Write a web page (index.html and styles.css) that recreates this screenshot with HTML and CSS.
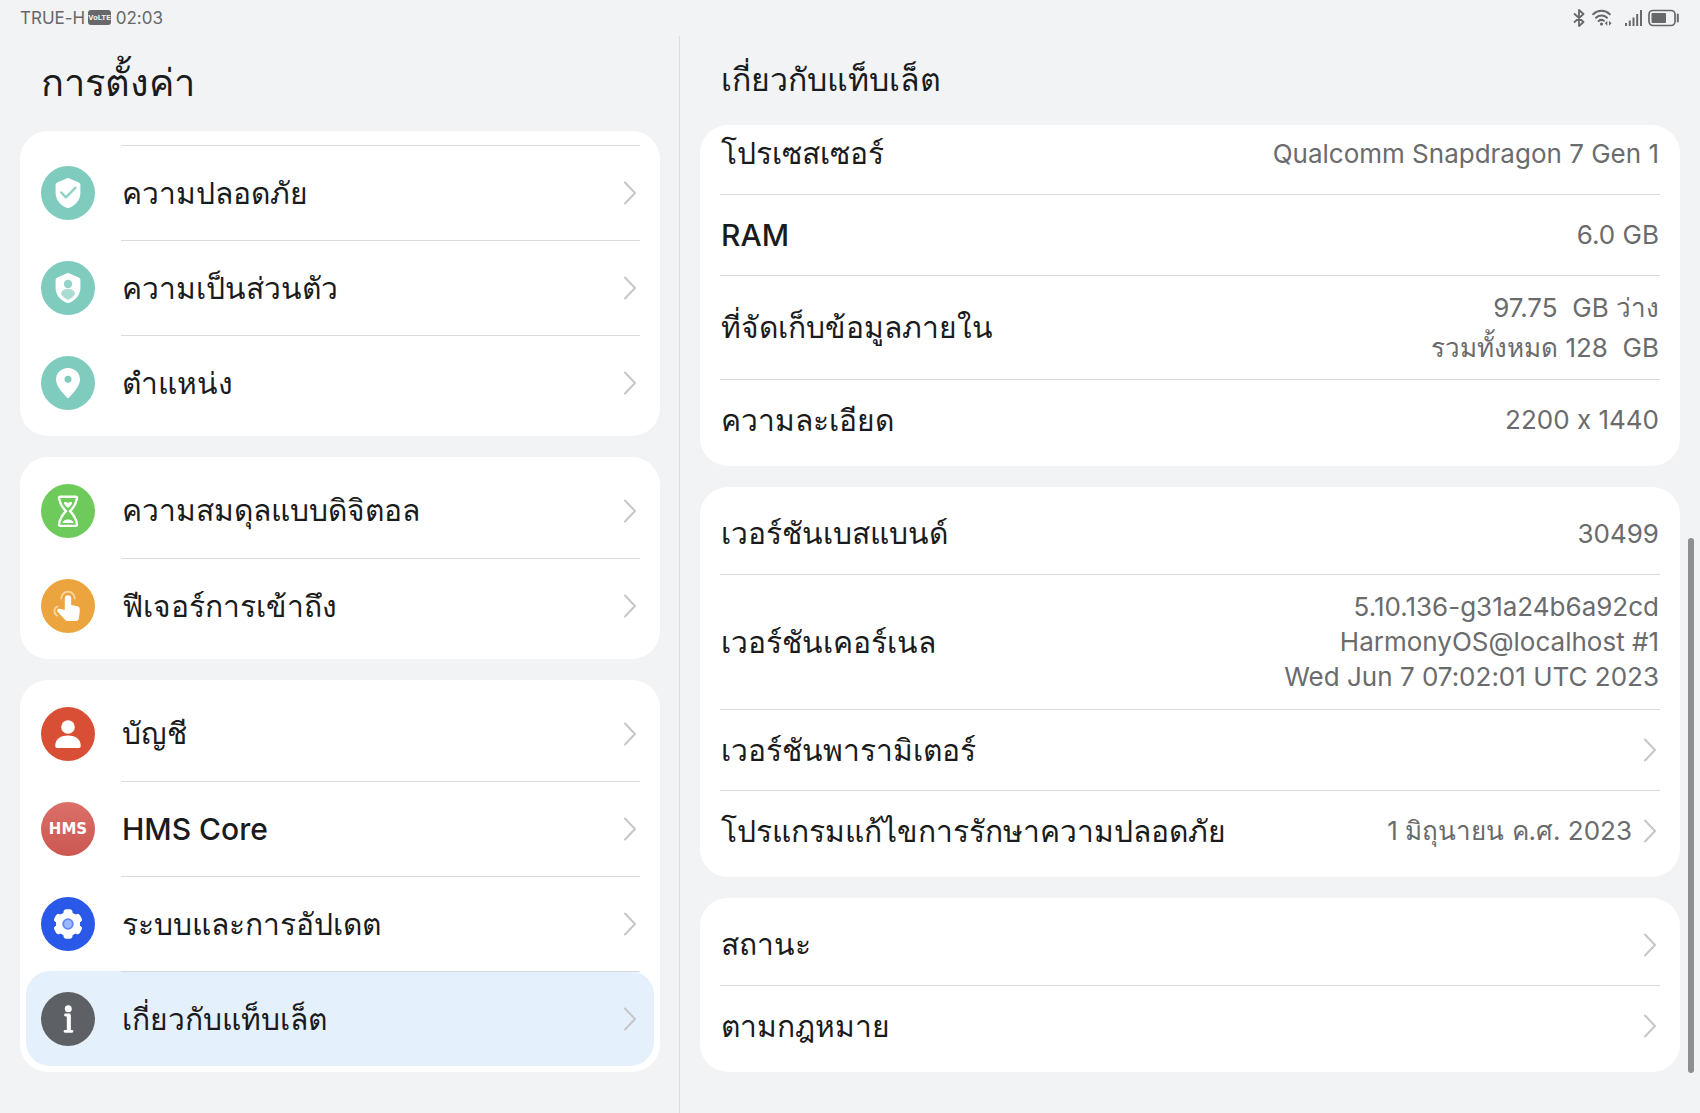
FILE: index.html
```html
<!DOCTYPE html>
<html lang="th">
<head>
<meta charset="utf-8">
<meta name="viewport" content="width=device-width, initial-scale=1">
<title>การตั้งค่า</title>
<link rel="stylesheet" href="styles.css">
</head>
<body>
<svg class="defs" aria-hidden="true">
  <symbol id="chevron" viewBox="0 0 12 24"><path d="M1 1.500 11 12 1 22.500" fill="none" stroke="currentColor" stroke-width="2" stroke-linecap="round" stroke-linejoin="round"/></symbol>
</svg>

<header class="status">
  <div class="status-side">
    <span>TRUE-H</span><span class="volte">VoLTE</span><time class="clock">02:03</time>
  </div>
  <div class="status-side status-icons" aria-hidden="true">
    <svg class="bt" width="12" height="18" viewBox="0 0 12 18"><path d="M1 4.500 10.500 13 6 17V1l4.500 4L1 13.500" fill="none" stroke="currentColor" stroke-width="1.800" stroke-linejoin="round"/></svg>
    <svg class="wifi" width="20" height="18" viewBox="0 0 20 18"><g fill="none" stroke="currentColor" stroke-width="2" stroke-linecap="round"><path d="M1.200 5.200a12 12 0 0 1 16.600 0"/><path d="M4 8.800a8 8 0 0 1 11 0"/><path d="M6.600 12a4.500 4.500 0 0 1 5.400-.2"/></g><circle cx="9.500" cy="15" r="1.600" fill="currentColor"/><path d="M15.300 11.800v5l-2.500-2.500zM17 11.800v5l2.500-2.500z" fill="currentColor"/></svg>
    <svg class="signal" width="18" height="18" viewBox="0 0 18 18"><path d="M0 14h2v3H0zM3.800 11.500h2V17h-2zM7.500 8.500h2V17h-2zM11.200 5h2v12h-2zM15 1h2v16h-2z" fill="currentColor"/></svg>
    <svg width="32" height="18" viewBox="0 0 32 18"><rect x="1" y="1.500" width="26" height="15" rx="4" fill="none" stroke="currentColor" stroke-width="1.700"/><rect x="3.500" y="4" width="14.500" height="10" rx="1" fill="currentColor"/><path d="M29.800 5.500v7" stroke="currentColor" stroke-width="2" stroke-linecap="round"/></svg>
  </div>
</header>

<div class="panes">
  <nav class="pane menu" aria-labelledby="menu-title">
    <h1 class="menu-title" id="menu-title">การตั้งค่า</h1>
    <div class="cards">
      <ul class="card card-scrolled">
        <li><a class="item" href="#security">
          <svg class="icon" viewBox="0 0 54 54"><circle cx="27" cy="27" r="27" fill="#7fcbbd"/><path d="M25.500 12.400q1.500-.9 3 0l9.300 4q1.600.7 1.600 2.300V27c0 7-5.500 12.500-10.900 14.800q-1.500.6-3 0C20 39.500 14.600 34 14.600 27v-8.300q0-1.600 1.600-2.300z" fill="#fff"/><path d="M20.200 26.500l4.800 4.800 9.300-9.500" fill="none" stroke="#8fd1c5" stroke-width="2.400" stroke-linecap="round" stroke-linejoin="round"/></svg>
          <span class="item-body"><span class="label">ความปลอดภัย</span><svg class="chevron"><use href="#chevron"/></svg></span></a></li>
        <li><a class="item" href="#privacy">
          <svg class="icon" viewBox="0 0 54 54"><circle cx="27" cy="27" r="27" fill="#7fcbbd"/><path d="M25.500 12.400q1.500-.9 3 0l9.300 4q1.600.7 1.600 2.300V27c0 7-5.500 12.500-10.900 14.800q-1.500.6-3 0C20 39.500 14.600 34 14.600 27v-8.300q0-1.600 1.600-2.300z" fill="#fff"/><circle cx="27" cy="23" r="4.200" fill="#93d3c8"/><path d="M20 33c0-3 3-5 7-5s7 2 7 5c-1.500 2.500-4 4.700-7 6-3-1.300-5.500-3.500-7-6z" fill="#a9dcd3"/></svg>
          <span class="item-body"><span class="label">ความเป็นส่วนตัว</span><svg class="chevron"><use href="#chevron"/></svg></span></a></li>
        <li><a class="item" href="#location">
          <svg class="icon" viewBox="0 0 54 54"><circle cx="27" cy="27" r="27" fill="#7fcbbd"/><path d="M27 12c6.800 0 12 5.200 12 11.600C39 31 31.500 37.500 28.200 41.500q-1.200 1.300-2.400 0C22.500 37.500 15 31 15 23.600 15 17.200 20.200 12 27 12z" fill="#fff"/><circle cx="27" cy="23.300" r="3.500" fill="#7fcbbd"/></svg>
          <span class="item-body"><span class="label">ตำแหน่ง</span><svg class="chevron"><use href="#chevron"/></svg></span></a></li>
      </ul>

      <ul class="card">
        <li><a class="item" href="#balance">
          <svg class="icon" viewBox="0 0 54 54"><circle cx="27" cy="27" r="27" fill="#6dca5b"/><path d="M19.500 12.800h15q2 0 1.400 2c-1 5-3.400 9-6.900 12.400 3.500 3.500 5.900 7.500 6.900 12.500q.6 2.200-1.400 2.200h-15q-2 0-1.400-2.200c1-5 3.400-9 6.900-12.500-3.500-3.400-5.900-7.400-6.900-12.400q-.6-2 1.400-2z" fill="none" stroke="#fff" stroke-width="2.400" stroke-linejoin="round"/><path d="M23 18.500c2-1.200 3 .3 4 .3s2-1.500 4-.3c.3 2-2 4-4 5.500-2-1.500-4.300-3.500-4-5.500zM21.500 39c0-2 3-3.500 5.500-3.500s5.500 1.500 5.500 3.500z" fill="#fff"/></svg>
          <span class="item-body"><span class="label">ความสมดุลแบบดิจิตอล</span><svg class="chevron"><use href="#chevron"/></svg></span></a></li>
        <li><a class="item" href="#accessibility">
          <svg class="icon" viewBox="0 0 54 54"><circle cx="27" cy="27" r="27" fill="#eca43f"/><g fill="none" stroke="#f7d6a6" stroke-width="1.800" stroke-linecap="round"><path d="M20.200 19.500a6.800 6.800 0 1 1 13.600 0"/><path d="M16.500 27.500c-4 1-4 7.500-.5 9"/></g><path d="M23.800 19.500a3.200 3.200 0 0 1 6.400 0V26l6.300 1.300q2.500.7 2.400 3.200L38 39q-.4 3-3 3h-8q-1.800 0-3.200-1.500l-7-7.500c-1.500-1.800 0-3.500 2-3.300l5 1.300z" fill="#fff"/></svg>
          <span class="item-body"><span class="label">ฟีเจอร์การเข้าถึง</span><svg class="chevron"><use href="#chevron"/></svg></span></a></li>
      </ul>

      <ul class="card">
        <li><a class="item" href="#account">
          <svg class="icon" viewBox="0 0 54 54"><circle cx="27" cy="27" r="27" fill="#d84f36"/><circle cx="27" cy="20" r="6.800" fill="#fff"/><path d="M14.200 39c0-6.500 5-10.500 12.800-10.500S39.800 32.500 39.800 39q0 2-2 2H16.200q-2 0-2-2z" fill="#fff"/></svg>
          <span class="item-body"><span class="label">บัญชี</span><svg class="chevron"><use href="#chevron"/></svg></span></a></li>
        <li><a class="item" href="#hms">
          <span class="icon hms" aria-hidden="true">HMS</span>
          <span class="item-body"><span class="label label-latin">HMS Core</span><svg class="chevron"><use href="#chevron"/></svg></span></a></li>
        <li><a class="item" href="#system">
          <svg class="icon" viewBox="0 0 54 54"><circle cx="27" cy="27" r="27" fill="#2a59ea"/><g fill="#fff"><circle cx="27" cy="27" r="12"/><rect x="22.500" y="12.300" width="9" height="29.400" rx="3"/><rect x="22.500" y="12.300" width="9" height="29.400" rx="3" transform="rotate(60 27 27)"/><rect x="22.500" y="12.300" width="9" height="29.400" rx="3" transform="rotate(120 27 27)"/></g><circle cx="27" cy="27" r="4.800" fill="#9db9fb" stroke="#5f86f0" stroke-width="1.800"/></svg>
          <span class="item-body"><span class="label">ระบบและการอัปเดต</span><svg class="chevron"><use href="#chevron"/></svg></span></a></li>
        <li><a class="item item-current" href="#about" aria-current="page">
          <svg class="icon" viewBox="0 0 54 54"><circle cx="27" cy="27" r="27" fill="#5d6064"/><circle cx="27.300" cy="16.800" r="3.500" fill="#fff"/><path d="M24.500 23h3.500v16M24 39.300h7" fill="none" stroke="#fff" stroke-width="2.800" stroke-linecap="round"/><path d="M25.800 23h4v16h-4z" fill="#fff"/></svg>
          <span class="item-body"><span class="label">เกี่ยวกับแท็บเล็ต</span><svg class="chevron"><use href="#chevron"/></svg></span></a></li>
      </ul>
    </div>
  </nav>

  <main class="pane about" id="about">
    <h2 class="about-title">เกี่ยวกับแท็บเล็ต</h2>
    <div class="cards">
      <dl class="card details details-scrolled">
        <div class="row"><dt class="label">โปรเซสเซอร์</dt><dd class="value">Qualcomm Snapdragon 7 Gen 1</dd></div>
        <div class="row"><dt class="label label-latin">RAM</dt><dd class="value">6.0 GB</dd></div>
        <div class="row"><dt class="label">ที่จัดเก็บข้อมูลภายใน</dt><dd class="value value-storage">97.75&nbsp; GB ว่าง<br>รวมทั้งหมด 128&nbsp; GB</dd></div>
        <div class="row"><dt class="label">ความละเอียด</dt><dd class="value">2200 x 1440</dd></div>
      </dl>

      <div class="card details">
        <div class="row"><span class="label">เวอร์ชันเบสแบนด์</span><span class="value">30499</span></div>
        <div class="row"><span class="label">เวอร์ชันเคอร์เนล</span><span class="value">5.10.136-g31a24b6a92cd<br>HarmonyOS@localhost #1<br>Wed Jun 7 07:02:01 UTC 2023</span></div>
        <a class="row" href="#parameters"><span class="label">เวอร์ชันพารามิเตอร์</span><svg class="chevron"><use href="#chevron"/></svg></a>
        <a class="row" href="#patch"><span class="label">โปรแกรมแก้ไขการรักษาความปลอดภัย</span><span class="value">1 มิถุนายน ค.ศ. 2023</span><svg class="chevron"><use href="#chevron"/></svg></a>
      </div>

      <div class="card details">
        <a class="row" href="#state"><span class="label">สถานะ</span><svg class="chevron"><use href="#chevron"/></svg></a>
        <a class="row" href="#legal"><span class="label">ตามกฎหมาย</span><svg class="chevron"><use href="#chevron"/></svg></a>
      </div>
    </div>
    <div class="scrollbar" aria-hidden="true"></div>
  </main>
</div>
</body>
</html>
```
FILE: styles.css
```css
* {
  box-sizing: border-box;
}

body {
  margin: 0;
  min-height: 100vh;
  display: flex;
  flex-direction: column;
  background: #f1f3f5;
  color: #1a1b1c;
  font-family: Inter, sans-serif;
  font-size: 30px;
  font-variant-ligatures: no-contextual;
}

a {
  color: inherit;
  text-decoration: none;
}

ul,
dl,
dd {
  margin: 0;
  padding: 0;
  list-style: none;
}

.defs {
  display: none;
}

/* Status bar */

.status {
  height: 36px;
  padding: 0 20px;
  display: flex;
  justify-content: space-between;
  color: #66686a;
  font-size: 17px;
}

.status-side {
  height: 35px;
  display: flex;
  align-items: center;
}

.volte {
  margin: 0 5px 0 3px;
  border-radius: 3px;
  background: #66686a;
  color: #f1f3f5;
  font-family: Roboto, sans-serif;
  font-size: 8px;
  font-weight: 700;
  line-height: 15px;
}

.bt {
  margin-right: 7px;
}

.wifi {
  margin-right: 13px;
}

.signal {
  margin-right: 5px;
}

/* Two panes */

.panes {
  flex: 1;
  display: grid;
  grid-template-columns: 2fr 3fr;
}

.pane {
  min-width: 0;
  padding: 0 20px 40px;
}

.menu {
  padding-right: 19px;
  border-right: 1px solid #dcdee0;
}

.about {
  position: relative;
}

h1,
h2 {
  margin: 0;
  padding: 0 21px;
  font-weight: 400;
}

.menu-title {
  height: 95px;
  font-size: 38px;
  line-height: 93px;
}

.about-title {
  height: 89px;
  font-size: 32px;
  line-height: 87px;
}

.cards {
  display: flex;
  flex-direction: column;
  gap: 21px;
}

.card {
  padding: 6px;
  border-radius: 28px;
  background: #fff;
  overflow: hidden;
}

.label-latin {
  font-weight: 500;
}

.chevron {
  flex: none;
  width: 12px;
  height: 24px;
  color: #c6c7c8;
}

/* Menu list */

.card-scrolled {
  padding-top: 14px;
}

.item {
  height: 95px;
  padding: 0 14px 0 15px;
  display: flex;
  align-items: center;
  gap: 26px;
  border-radius: 24px;
}

.item-current {
  background: #e5f0fd;
}

.icon {
  flex: none;
  width: 54px;
  height: 54px;
}

.hms {
  border-radius: 50%;
  background: linear-gradient(#db7069, #cb5752);
  color: #fff;
  font-family: "DejaVu Sans", sans-serif;
  font-size: 15px;
  font-weight: 700;
  line-height: 54px;
  text-align: center;
}

.item-body {
  flex: 1;
  height: 95px;
  padding: 0 4px 0 1px;
  display: flex;
  align-items: center;
  justify-content: space-between;
}

.card-scrolled .item-body,
li + li .item-body {
  border-top: 1px solid #d9dadb;
}

/* Detail rows */

.details {
  padding: 6px 20px;
}

.row {
  min-height: 81px;
  padding: 0 1px;
  display: flex;
  align-items: center;
}

.row + .row {
  border-top: 1px solid #d9dadb;
}

.details-scrolled {
  padding-top: 0;
}

.details-scrolled .row:first-child {
  margin-top: -12px;
}

.row .label {
  margin-right: auto;
}

.value {
  padding: 14px 0 15px;
  color: #6a6b6c;
  font-size: 26px;
  line-height: 35px;
  text-align: right;
}

.value-storage {
  padding: 12px 0 11px;
  line-height: 40px;
}

.row .chevron {
  margin: 0 3px 0 12px;
}

.scrollbar {
  position: absolute;
  top: 502px;
  right: 6px;
  bottom: 40px;
  width: 6px;
  border-radius: 3px;
  background: #8e8f91;
}
```
